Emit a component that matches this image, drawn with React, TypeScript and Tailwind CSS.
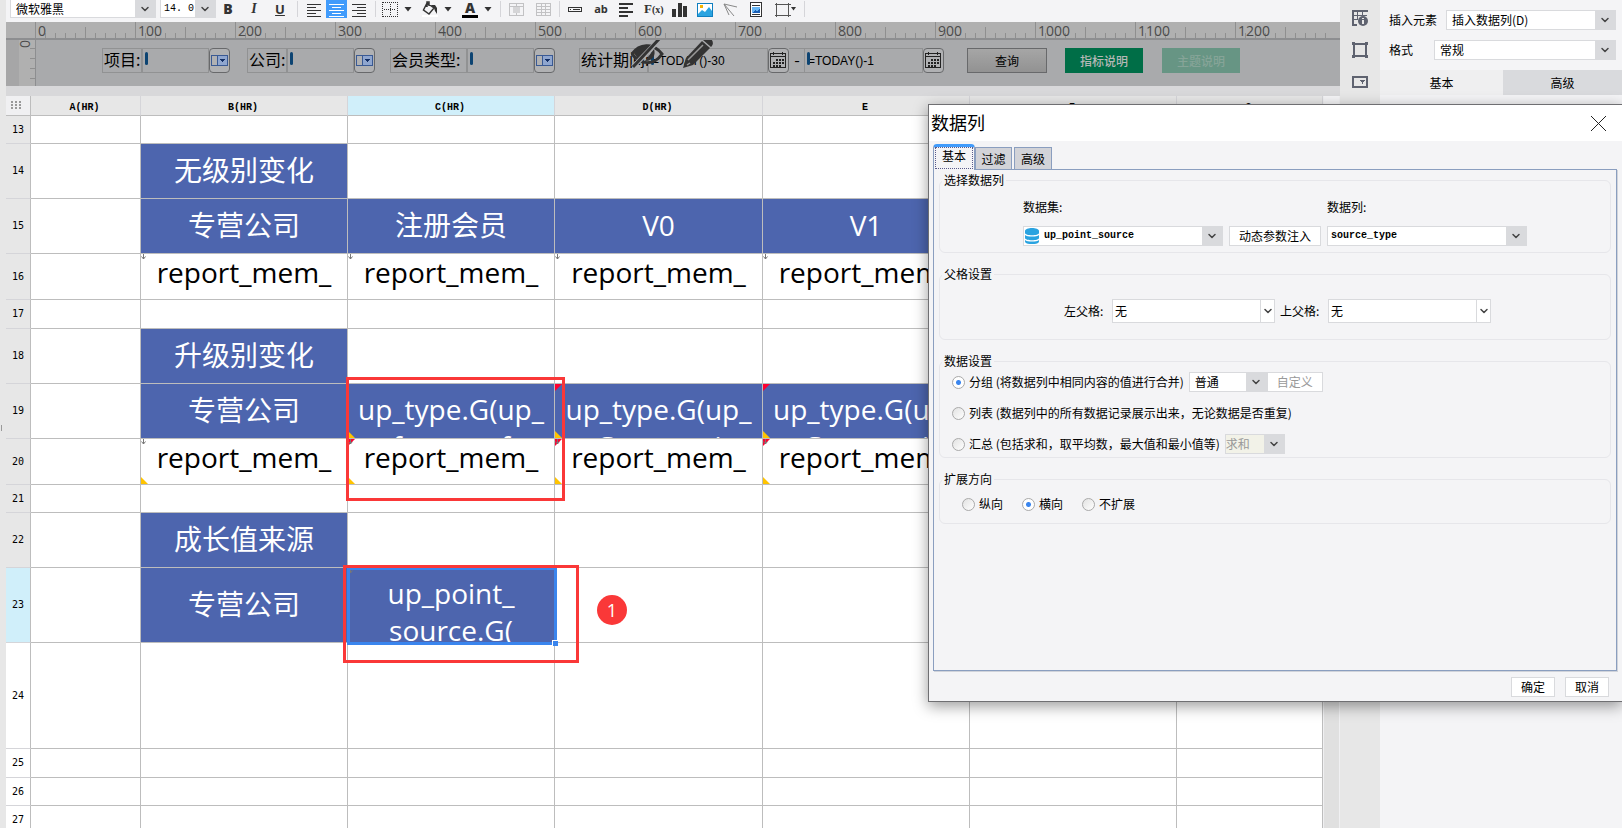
import { ReactNode } from "react";
import clsx from "clsx";
import { ChevronDown } from "lucide-react";

const columns = [
	{ name: "A(HR)", w: "w-[110px]" },
	{ name: "B(HR)", w: "w-[207px]" },
	{ name: "C(HR)", w: "w-[207px]", active: true },
	{ name: "D(HR)", w: "w-[208px]" },
	{ name: "E", w: "w-[207px]" },
	{ name: "F", w: "w-[207px]" },
	{ name: "G", w: "" },
];

type Cell = { text: string[]; head?: boolean; pad?: string; marks?: string };
type Row = { n: number; h: string; cells?: Record<number, Cell>; active?: boolean; blank?: boolean };

const head = (text: string): Cell => ({ text: [text], head: true });
const field = (second: string, marks: string): Cell => ({ text: ["report_mem_", second], marks });
const group = (second: string, marks: string): Cell => ({ text: ["up_type.G(up_", second], head: true, pad: "pt-[7px]", marks });

const rows: Row[] = [
	{ n: 13, h: "h-[27px]" },
	{ n: 14, h: "h-[54px]", cells: { 1: head("无级别变化") } },
	{ n: 15, h: "h-[54px]", cells: { 1: head("专营公司"), 2: head("注册会员"), 3: head("V0"), 4: head("V1") } },
	{ n: 16, h: "h-[45px]", cells: { 1: field("from_no", "a"), 2: field("from_no", "a"), 3: field("from_no", "a"), 4: field("from_no", "a") } },
	{ n: 17, h: "h-[28px]" },
	{ n: 18, h: "h-[54px]", cells: { 1: head("升级别变化") } },
	{ n: 19, h: "h-[54px]", cells: { 1: head("专营公司"), 2: group("f_name_f", "y"), 3: group("G_name_i", "ry"), 4: group("G_name_i", "ry") } },
	{ n: 20, h: "h-[45px]", cells: { 1: field("point_no", "ay"), 2: field("point_no", "ray"), 3: field("point_no", "ray"), 4: field("point_no", "ray") } },
	{ n: 21, h: "h-[27px]" },
	{ n: 22, h: "h-[54px]", cells: { 1: head("成长值来源") } },
	{ n: 23, h: "h-[74px]", active: true, cells: { 1: head("专营公司"), 2: { text: ["up_point_", "source.G("], head: true, pad: "pt-[7px]", marks: "a" } } },
	{ n: 24, h: "h-[105px]", blank: true },
	{ n: 25, h: "h-[28px]", blank: true },
	{ n: 26, h: "h-[27px]", blank: true },
	{ n: 27, h: "h-[28px]", blank: true },
];

function Combo({ label, options, className, arrow = "w-5 bg-[#d9dadd]", disabled }: { label: string; options: string[]; className?: string; arrow?: string; disabled?: boolean }) {
	return (
		<div className={clsx("relative border border-[#d9dadd]", disabled ? "bg-[#f2f2e8] text-[#999999]" : "bg-white", className)}>
			<select aria-label={label} disabled={disabled} className="block h-full w-full appearance-none bg-transparent pr-5 leading-4 outline-none">
				{options.map((o) => (
					<option key={o}>{o}</option>
				))}
			</select>
			<span className={clsx("pointer-events-none absolute inset-y-0 right-0 flex items-center justify-center", arrow)}>
				<ChevronDown className="size-3 text-[#444444]" strokeWidth={3} />
			</span>
		</div>
	);
}

function Icon({ w, h = 16, children, label }: { w: number; h?: number; children: ReactNode; label: string }) {
	return (
		<button type="button" aria-label={label} className="block shrink-0">
			<svg width={w} height={h} viewBox={`0 0 ${w} ${h}`} className="block" fill="none" stroke="#333" shapeRendering="crispEdges">
				{children}
			</svg>
		</button>
	);
}

function Caret() {
	return (
		<svg width="8" height="5" viewBox="0 0 8 5" className="shrink-0">
			<path d="M0.5 0h7L4 4.5z" fill="#333" />
		</svg>
	);
}

function Divider() {
	return <span className="h-4 w-px shrink-0 bg-[#d5d5d9]" />;
}

function Toolbar() {
	return (
		<div className="flex h-[22px] items-start overflow-hidden bg-[#f4f4f6] pl-1">
			<Combo label="字体" options={["微软雅黑"]} className="h-[18px] w-[146px] border-t-0 pl-[5px]" />
			<Combo label="字号" options={["14. 0"]} className="ml-1 h-[18px] w-[56px] border-t-0 pl-[3px] font-['Liberation_Mono',monospace] text-[10px]" />
			<div className="flex h-[18px] items-center">
				<button type="button" className="ml-[5px] w-3.5 font-['Open_Sans',sans-serif] text-sm font-extrabold text-[#333]">B</button>
				<button type="button" className="ml-3 w-3.5 font-['Liberation_Serif',serif] text-sm font-bold text-[#333] italic">I</button>
				<button type="button" className="ml-3 w-3.5 font-['Open_Sans',sans-serif] text-[13px] font-bold text-[#333] underline">U</button>
				<span className="w-2.5" />
				<Divider />
				<span className="w-2" />
				<Icon w={16} label="左对齐">
					<path d="M1 3.5h14M1 6.5h9M1 9.5h14M1 12.5h9M1 15.5h14" />
				</Icon>
				<button type="button" aria-label="居中" className="ml-1 flex h-[18px] w-[21px] items-center justify-center bg-[#409bfb]">
					<svg width="15" height="16" stroke="#fff" shapeRendering="crispEdges">
						<path d="M0 3.5h15M3 6.5h9M0 9.5h15M3 12.5h9M0 15.5h15" />
					</svg>
				</button>
				<span className="w-1" />
				<Icon w={16} label="右对齐">
					<path d="M1 3.5h14M6 6.5h9M1 9.5h14M6 12.5h9M1 15.5h14" />
				</Icon>
				<span className="w-2" />
				<Divider />
				<span className="w-1.5" />
				<Icon w={16} label="边框">
					<path d="M.5 1.5h15M.5 15.5h15M.5 1v15M15.5 1v15" strokeDasharray="1 1" />
					<path d="M2 8.500h12M8.500 3v12" strokeDasharray="1 1" />
				</Icon>
				<span className="w-1.5" />
				<Caret />
				<span className="w-2.5" />
				<Icon w={16} label="背景色">
					<path d="M5 2l7 5-5 6-5.500-4zM5 6V1h2v4" strokeWidth="1.5" shapeRendering="auto" />
					<path d="M9 4l4 0 2 3v6l-2-3-1-3z" fill="#333" stroke="none" shapeRendering="auto" />
					<path d="M0 14h16v3H0z" fill="#fff" stroke="none" />
				</Icon>
				<span className="w-1.5" />
				<Caret />
				<span className="w-2.5" />
				<button type="button" className="h-[17px] w-4 border-b-[3px] border-black font-['Open_Sans',sans-serif] text-sm leading-[14px] font-extrabold text-[#333]">A</button>
				<span className="w-1.5" />
				<Caret />
				<span className="w-2" />
				<Divider />
				<span className="w-2" />
				<Icon w={15} h={14} label="合并单元格">
					<path d="M.5 1.500h14v12H.5zM1 4.500h13M7.500 1v3M7.500 11v3" stroke="#c2c2c4" />
					<path d="M4 5h7v6H4z" fill="#d5d5d7" stroke="none" />
				</Icon>
				<span className="w-3" />
				<Icon w={15} h={14} label="取消合并">
					<path d="M.5 1.5h14v12H.5zM1 4.500h13M1 7.500h13M1 10.500h13M5.500 1v12M9.500 1v12" stroke="#c2c2c4" />
				</Icon>
				<span className="w-2" />
				<Divider />
				<span className="w-2" />
				<Icon w={14} label="文本框">
					<path d="M.5 6.500h13v4H.5zM2 8.500h1M5 8.500h7" />
				</Icon>
				<button type="button" className="ml-3 w-3.5 font-['Open_Sans',sans-serif] text-[11px] font-bold text-[#333]">ab</button>
				<span className="w-2.5" />
				<Icon w={16} label="段落">
					<path d="M1 3h14M1 7h9M1 11h14M1 15h9" strokeWidth="2" />
				</Icon>
				<button type="button" className="ml-2.5 w-4 text-left font-['Liberation_Serif',serif] text-[13px] font-bold whitespace-nowrap text-[#333]">
					F<span className="text-[10px]">(x)</span>
				</button>
				<span className="w-3" />
				<Icon w={15} label="图表">
					<path d="M0 8h4v8H0zM5.500 2h4v14h-4zM11 5h4v11h-4z" fill="#333" stroke="none" />
				</Icon>
				<span className="w-2.5" />
				<Icon w={16} label="图片">
					<path d="M.5 2.5h15v13H.5z" fill="#fff" stroke="#0f7fc0" />
					<path d="M1 13l4-4 3 2 4-5 3 4v5H1z" fill="#2aa3e0" stroke="none" shapeRendering="auto" />
					<circle cx="4.500" cy="5.500" r="1.500" fill="#f5b400" stroke="none" />
				</Icon>
				<span className="w-2.5" />
				<Icon w={15} label="斜线">
					<path d="M1 3l13 3M1 3l10 12M1 3l5 11" stroke="#888" shapeRendering="auto" />
				</Icon>
				<span className="w-3" />
				<Icon w={12} label="子报表">
					<path d="M.5 1.5h11v14H.5zM2 4.500h8M2 13.500h8" fill="#fff" />
					<path d="M2 6h8v6H2z" fill="#67b5f4" stroke="none" />
					<path d="M2 12l3-3 2 1 3-2v4z" fill="#1b5fb4" stroke="none" />
				</Icon>
				<span className="w-3" />
				<Icon w={17} label="悬浮元素">
					<path d="M2.500 2v14M14.500 2v14M1 3.500h16M1 14.500h16" stroke="#555" />
				</Icon>
				<svg width="5" height="4" className="shrink-0">
					<path d="M0 0h5L2.500 3.500z" fill="#333" />
				</svg>
				<span className="w-2" />
				<Divider />
			</div>
		</div>
	);
}

const ticks = [10, 20, 30, 40, 60, 70, 80, 90];

function Ruler() {
	return (
		<div className="flex h-[18px] overflow-hidden border-b-2 border-[#8d8e90] bg-[#b0b0b0] pl-[29px]">
			{Array.from({ length: 13 }, (_, i) => (
				<div key={i} className="relative w-[100px] shrink-0">
					<svg width="100" height="16" className="absolute inset-0" stroke="#8f8f8f" shapeRendering="crispEdges">
						<path d="M.5 0v16M50.500 5v11" />
						{ticks.map((t) => (
							<path key={t} d={`M${t + 0.5} 11v5`} />
						))}
					</svg>
					<span className="relative block pl-[3px] font-['Open_Sans',sans-serif] text-sm leading-[18px] text-[#4b4b4b]">{i * 100}</span>
				</div>
			))}
		</div>
	);
}

function Param({ id, label, w, fw = "w-[67px]", value = "", calendar }: { id: string; label?: string; w: string; fw?: string; value?: string; calendar?: boolean }) {
	return (
		<div className="flex h-[25px] shrink-0 items-stretch">
			<label htmlFor={id} className={clsx("border border-[#919293] pl-px text-base leading-[21px] whitespace-nowrap", w, label === "-" && "border-x-0 text-center")}>
				{label}
			</label>
			<div className={clsx("relative border border-[#919293]", fw)}>
				<input id={id} defaultValue={value} className="block h-full w-full bg-transparent pl-[3px] font-['Liberation_Sans',sans-serif] text-xs outline-none" />
				<span className="absolute top-[3px] left-0.5 h-[13px] w-[3px] rounded-sm bg-[#0d4472]" />
			</div>
			<button type="button" aria-label="展开" className="flex w-[21px] items-center justify-center rounded-sm border border-[#68696b] bg-[#b0b1b3]">
				{calendar ? (
					<svg width="17" height="17" fill="none" stroke="#222" shapeRendering="crispEdges">
						<path d="M.5 1.500h15v14H.5zM1 4.500h14M3.500 0v3M12.500 0v3" />
						<path d="M6 7.500h8M3 10.500h11M3 13.500h8" strokeWidth="2" strokeDasharray="2 1" />
					</svg>
				) : (
					<svg width="17" height="11" fill="none" stroke="#3a5a94" shapeRendering="crispEdges">
						<path d="M.5.5h16v10H.5z" />
						<path d="M6.500 1v9" />
						<path d="M7 1h9v9H7z" fill="#8fa6cf" stroke="none" />
						<path d="M8.500 4h6l-3 3.500z" fill="#132f66" stroke="none" />
					</svg>
				)}
			</button>
		</div>
	);
}

function ParamPane() {
	return (
		<div className="flex h-[46px]">
			<div className="flex w-[30px] shrink-0 justify-end bg-[#a6a6a7]">
				<div className="relative w-[17px] border-r border-[#8d8e90] bg-[#b0b0b0]">
					<span className="block h-2 w-3 rotate-270 text-center font-['Open_Sans',sans-serif] text-sm leading-2 text-[#4b4b4b]">0</span>
					<svg width="16" height="46" className="absolute inset-0" stroke="#8f8f8f" shapeRendering="crispEdges">
						<path d="M11 8.500h5M11 18.500h5M11 28.500h5M11 38.500h5" />
					</svg>
				</div>
			</div>
			<form className="relative flex flex-1 overflow-hidden bg-[#a9aaac] pt-2 pl-[66px]">
				<Param id="project" label="项目:" w="w-10" />
				<span className="w-[17px] shrink-0" />
				<Param id="company" label="公司:" w="w-10" />
				<span className="w-[15px] shrink-0" />
				<Param id="member" label="会员类型:" w="w-[77px]" />
				<span className="w-6 shrink-0" />
				<Param id="from" label="统计期间:" w="w-[69px]" fw="w-[120px]" value="=TODAY()-30" calendar />
				<Param id="to" label="-" w="w-[15px]" fw="w-[119px]" value="=TODAY()-1" calendar />
				<button type="button" className="ml-[23px] h-[25px] w-20 shrink-0 border border-[#68696b] bg-linear-to-b from-[#a6a6a6] to-[#929292]">查询</button>
				<button type="button" className="ml-[18px] h-[25px] w-[78px] shrink-0 bg-[#006e47] font-medium text-[#b5b8b6]">指标说明</button>
				<button type="button" className="ml-[19px] h-[25px] w-[78px] shrink-0 bg-[#679584] font-medium text-[#86a498]">主题说明</button>
				{/* preview / edit handles float over the parameter form */}
				<svg width="84" height="34" viewBox="0 0 84 34" className="pointer-events-none absolute -top-1 left-[595px]">
					<path d="M1 18C8 8 22 6 31 18C23 30 9 29 1 18z" fill="none" stroke="#333" strokeWidth="3" />
					<path d="M3 17C9 9 17 7 24 10L9 26z" fill="#333" />
					<path d="M14 25l9-12c2 6-1 12-9 12z" fill="#333" />
					<path d="M29 3L2 31" stroke="#a9aaac" strokeWidth="5" />
					<path d="M29 2L2 31" stroke="#333" strokeWidth="3" />
					<path d="M52 32l3-10L71 5l8 7-17 17z" fill="#333" />
					<path d="M72 4c3-4 6-3 8-1s3 5 0 8z" fill="#333" />
					<path d="M57 24l15-15M56 29l3-2" stroke="#999" strokeWidth="1.500" />
				</svg>
			</form>
		</div>
	);
}

function Marks({ kinds }: { kinds: string }) {
	return (
		<>
			{kinds.includes("r") && (
				<svg width="7" height="7" className="absolute top-0 left-0">
					<path d="M0 0h7L0 7z" fill="#ff0030" />
				</svg>
			)}
			{kinds.includes("a") && (
				<svg width="6" height="6" className="absolute top-0 left-0" stroke="#777" fill="none">
					<path d="M2.500 0v5M.5 2.500l2 2.500 2-2.500" />
				</svg>
			)}
			{kinds.includes("y") && (
				<svg width="7" height="7" className="absolute bottom-0 left-0">
					<path d="M0 0v7h7z" fill="#ffc400" />
				</svg>
			)}
		</>
	);
}

function Sheet() {
	return (
		<div className="relative min-h-0 min-w-0 flex-1 overflow-hidden bg-white">
			<table className="w-full table-fixed border-separate border-spacing-0">
				<thead>
					<tr className="bg-[#e7e7e7] font-['Liberation_Mono',monospace] text-[10px] leading-[15px]">
						<th className="w-[25px] border-r border-b border-[#bdbdbd] bg-[#f0f0f2] p-0">
							<svg width="10" height="9" className="ml-[5px]" fill="#999">
								{[0, 4, 8].map((x) => [0, 3, 6].map((y) => <rect key={`${x}${y}`} x={x} y={y} width="2" height="2" />))}
							</svg>
						</th>
						{columns.map((c) => (
							<th key={c.name} className={clsx("border-r border-b border-r-[#d5d5d9] border-b-[#bdbdbd] p-0 pt-1 pr-0.5", c.w, c.active && "bg-[#d0effa]")}>
								{c.name}
							</th>
						))}
					</tr>
				</thead>
				<tbody>
					{rows.map((r) => (
						<tr key={r.n}>
							<th className={clsx("border-r border-b border-r-[#bdbdbd] border-b-[#d5d5d9] p-0 font-['DejaVu_Sans_Mono',monospace] text-[10px] font-normal", r.active ? "bg-[#d0effa]" : r.blank ? "bg-white" : "bg-[#e7e7e7]")}>
								<div className={clsx("flex items-center justify-center", r.h)}>{r.n}</div>
							</th>
							{columns.map((c, i) => {
								const cell = r.cells?.[i];
								return (
									<td key={c.name} className={clsx("border-r border-b border-[#bdbdbd] p-0", cell?.head && "bg-[#4d65ae] text-white")}>
										{cell && (
											<div className={clsx("relative flex flex-col overflow-hidden text-center font-['Open_Sans','Noto_Sans_CJK_SC',sans-serif] text-[28px] leading-[37px] whitespace-nowrap", r.h, cell.pad, cell.text.length === 1 && "justify-center pb-0.5")}>
												{cell.text.map((t) => (
													<span key={t} className="shrink-0">{t}</span>
												))}
												{cell.marks && <Marks kinds={cell.marks} />}
											</div>
										)}
									</td>
								);
							})}
						</tr>
					))}
				</tbody>
			</table>

			{/* selection frame and annotations drawn over the cells */}
			<div className="pointer-events-none absolute top-[471px] left-[341px] h-[78px] w-[210px] border-[3px] border-[#3a85ee]">
				<span className="absolute -right-1 -bottom-1 size-[6px] border-t border-l border-white bg-[#3a85ee]" />
			</div>
			<div className="pointer-events-none absolute top-[281px] left-[340px] h-[124px] w-[219px] border-[3px] border-[#fa3838]" />
			<div className="pointer-events-none absolute top-[469px] left-[337px] h-[98px] w-[236px] border-[3px] border-[#fa3838]" />
			<div className="absolute top-[499px] left-[591px] flex size-[30px] items-center justify-center rounded-full bg-[#fa3838] font-['Open_Sans',sans-serif] text-lg text-white">1</div>
		</div>
	);
}

function SidePanel() {
	return (
		<aside className="flex w-[282px] shrink-0">
			<nav className="flex w-10 flex-col items-center gap-4 bg-[#e7e7e7] pt-[10px]">
				<Icon w={16} label="单元格元素">
					<path d="M16 1H1v14h4" stroke="#5f6370" strokeWidth="2" />
					<path d="M2 5.500h13M5.500 2v8M10.500 2v3M2 9.500h3" stroke="#5f6370" />
					<circle cx="11" cy="11" r="5" fill="#5f6370" stroke="none" shapeRendering="auto" />
					<path d="M11 7.500v1.500M11 10v4" stroke="#e7e7e7" strokeWidth="2" />
				</Icon>
				<Icon w={16} label="单元格属性">
					<path d="M2 2h12v12H2z" stroke="#5f6370" strokeWidth="2" />
					<path d="M0 0h3v3H0zM13 0h3v3h-3zM0 13h3v3H0zM13 13h3v3h-3z" fill="#5f6370" stroke="none" />
				</Icon>
				<Icon w={16} label="控件设置">
					<path d="M1 3h14v10H1z" stroke="#5f6370" strokeWidth="2" />
					<path d="M8 6h5l-2.500 4z" fill="#5f6370" stroke="none" />
				</Icon>
			</nav>
			<div className="flex-1 bg-[#f4f4f6]">
				<div className="flex h-[30px] items-end gap-[9px] pr-1.5 pl-[9px]">
					<span className="leading-5">插入元素</span>
					<Combo label="插入元素" options={["插入数据列(D)"]} className="h-5 flex-1 pl-[5px]" />
				</div>
				<div className="flex h-[30px] items-end pr-1.5 pl-[9px]">
					<span className="w-[45px] leading-5">格式</span>
					<Combo label="格式" options={["常规"]} className="h-5 flex-1 pl-[5px]" />
				</div>
				<div className="flex h-[35px] items-end">
					<button type="button" className="h-[25px] w-[123px] bg-[#efeff0]">基本</button>
					<button type="button" className="h-[25px] flex-1 bg-[#d9dadd]">高级</button>
				</div>
			</div>
		</aside>
	);
}

function Group({ title, className, children }: { title: string; className: string; children: ReactNode }) {
	return (
		<fieldset className={clsx("mx-[5px] rounded-md border border-[#e6e6ea]", className)}>
			<legend className="ml-0.5 px-0.5 leading-4">{title}</legend>
			{children}
		</fieldset>
	);
}

function Choice({ name, checked, children }: { name: string; checked?: boolean; children: ReactNode }) {
	return (
		<label className="flex items-center gap-1 whitespace-nowrap">
			<input
				type="radio"
				name={name}
				defaultChecked={checked}
				className="size-[13px] shrink-0 appearance-none rounded-full border border-[#a9a9a9] bg-linear-to-br from-[#e2e2e2] to-white checked:bg-[radial-gradient(circle,#3a85ee_0_2px,#ffffff_3px)]"
			/>
			{children}
		</label>
	);
}

function ColumnDialog() {
	return (
		<div role="dialog" aria-label="数据列" className="absolute top-[104px] right-0 flex h-[598px] w-[694px] flex-col border border-r-0 border-[#6f6f72] bg-[#f4f4f6] shadow-[0_4px_14px_rgba(0,0,0,0.4)]">
			<header className="flex h-9 items-center justify-between bg-white pr-4 pl-0.5">
				<h2 className="pb-0.5 text-lg leading-6">数据列</h2>
				<button type="button" aria-label="关闭">
					<svg width="15" height="15" stroke="#222" className="block">
						<path d="M0 0l15 15M15 0L0 15" />
					</svg>
				</button>
			</header>
			<div className="flex h-7 items-end px-1">
				<button type="button" className="relative z-10 -mb-px h-[26px] w-[42px] rounded-t-sm border-x border-t-[3px] border-x-[#8a9ebf] border-t-[#409bfb] bg-[#f4f4f6] p-px pt-0">
					<span className="block h-full border border-dotted border-[#5a5a8a] leading-4">基本</span>
				</button>
				<button type="button" className="h-[22px] w-[37px] border border-b-0 border-[#8a9ebf] bg-[#d2d3d8] leading-4">过滤</button>
				<button type="button" className="ml-0.5 h-[22px] w-[38px] border border-b-0 border-[#8a9ebf] bg-[#d2d3d8] leading-4">高级</button>
			</div>
			<div className="mr-[5px] ml-1 h-[502px] border border-[#8a9ebf] pt-0.5 shadow-[1px_1px_0_#d0d3da]">
				<Group title="选择数据列" className="h-[81px]">
					<div className="mt-[11px] flex pl-[83px] leading-4">
						<span className="w-[304px]">数据集:</span>
						<span>数据列:</span>
					</div>
					<div className="mt-[11px] flex gap-1.5 pl-[83px] font-['Liberation_Mono',monospace] text-[10px] font-bold">
						<div className="relative">
							<Combo label="数据集" options={["up_point_source"]} className="h-5 w-[200px] pl-[20px]" />
							<svg width="14" height="16" viewBox="0 0 14 16" className="absolute top-0.5 left-0.5" fill="#2aa3e0">
								<path d="M0 3c0-4 14-4 14 0v2c0 3-14 3-14 0z" />
								<path d="M0 7c2 2 12 2 14 0v3c0 3-14 3-14 0z" />
								<path d="M0 12c2 2 12 2 14 0v1.500c0 3.500-14 3.500-14 0z" />
							</svg>
						</div>
						<button type="button" className="h-5 w-[92px] border border-[#d9dadd] bg-white font-['Noto_Sans_CJK_SC',sans-serif] text-xs font-normal">动态参数注入</button>
						<Combo label="数据列" options={["source_type"]} className="h-5 w-[200px] pl-[3px]" />
					</div>
				</Group>
				<Group title="父格设置" className="mt-[13px] h-[74px]">
					<div className="mt-[17px] flex items-center pl-[124px]">
						<span className="w-12">左父格:</span>
						<Combo label="左父格" options={["无"]} className="h-6 w-[163px] pl-0.5" arrow="w-[14px] border-l border-[#d9dadd]" />
						<span className="ml-[5px] w-12">上父格:</span>
						<Combo label="上父格" options={["无"]} className="h-6 w-[163px] pl-0.5" arrow="w-[14px] border-l border-[#d9dadd]" />
					</div>
				</Group>
				<Group title="数据设置" className="mt-[13px] h-[105px]">
					<div className="mt-[3px] flex h-5 items-center pl-3">
						<Choice name="mode" checked>分组 (将数据列中相同内容的值进行合并)</Choice>
						<Combo label="分组方式" options={["普通"]} className="ml-[5px] h-5 w-[78px] pl-[5px]" />
						<button type="button" disabled className="h-5 w-14 border border-[#d9dadd] bg-white text-[#999999]">自定义</button>
					</div>
					<div className="mt-[11px] flex h-5 items-center pl-3">
						<Choice name="mode">列表 (数据列中的所有数据记录展示出来，无论数据是否重复)</Choice>
					</div>
					<div className="mt-[11px] flex h-5 items-center pl-3">
						<Choice name="mode">汇总 (包括求和，取平均数，最大值和最小值等)</Choice>
						<Combo label="汇总方式" options={["求和"]} className="ml-[5px] h-5 w-[60px]" disabled />
					</div>
				</Group>
				<Group title="扩展方向" className="mt-[13px] h-[53px]">
					<div className="mt-[9px] flex items-center gap-[19px] pl-[22px]">
						<Choice name="direction">纵向</Choice>
						<Choice name="direction" checked>横向</Choice>
						<Choice name="direction">不扩展</Choice>
					</div>
				</Group>
			</div>
			<footer className="mt-1.5 flex justify-end gap-2.5 pr-[13px]">
				<button type="button" className="h-5 w-11 border border-[#d9dadd] bg-white">确定</button>
				<button type="button" className="h-5 w-11 border border-[#d9dadd] bg-white">取消</button>
			</footer>
		</div>
	);
}

export default function App() {
	return (
		<div className="relative flex h-screen overflow-hidden bg-[#e7e7e7] font-['Noto_Sans_CJK_SC',sans-serif] text-xs leading-4 text-black">
			<div className="flex w-1.5 shrink-0 items-center pt-7">
				<span className="ml-px h-1.5 w-px bg-[#999999]" />
			</div>
			<main className="flex min-w-0 flex-1 flex-col">
				<Toolbar />
				<Ruler />
				<ParamPane />
				<div className="h-[10px] bg-[#d8d8da]" />
				<div className="flex min-h-0 flex-1">
					<Sheet />
					<div className="w-[17px] shrink-0 border-x border-[#f0f0f2] bg-[#e0e0e0]">
						<div className="flex h-[17px] items-center justify-center bg-[#f4f4f6]">
							<svg width="7" height="4" fill="none" stroke="#555">
								<path d="M.5 4l3-3 3 3" />
							</svg>
						</div>
					</div>
				</div>
			</main>
			<SidePanel />
			<ColumnDialog />
		</div>
	);
}
